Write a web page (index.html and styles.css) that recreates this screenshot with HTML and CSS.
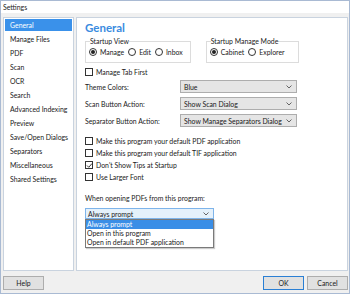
FILE: index.html
```html
<!DOCTYPE html>
<html>
<head>
<meta charset="utf-8">
<link rel="stylesheet" href="styles.css">
</head>
<body>
<div class="window">
  <div class="titlebar">Settings</div>
  <div class="body">
    <div class="main">
      <ul class="nav">
        <li class="selected">General</li>
        <li>Manage Files</li>
        <li>PDF</li>
        <li>Scan</li>
        <li>OCR</li>
        <li>Search</li>
        <li>Advanced Indexing</li>
        <li>Preview</li>
        <li>Save/Open Dialogs</li>
        <li>Separators</li>
        <li>Miscellaneous</li>
        <li>Shared Settings</li>
      </ul>
      <div class="panel">
        <h1 class="heading">General</h1>
        <div class="groups">
          <fieldset class="group view">
            <legend>Startup View</legend>
            <div class="radios">
              <span class="radio on"></span><span class="rlabel">Manage</span>
              <span class="radio"></span><span class="rlabel">Edit</span>
              <span class="radio"></span><span class="rlabel">Inbox</span>
            </div>
          </fieldset>
          <fieldset class="group mode">
            <legend>Startup Manage Mode</legend>
            <div class="radios">
              <span class="radio on"></span><span class="rlabel">Cabinet</span>
              <span class="radio"></span><span class="rlabel">Explorer</span>
            </div>
          </fieldset>
        </div>
        <div class="check first"><span class="box"></span><span>Manage Tab First</span></div>
        <div class="row first-row"><span class="rlbl">Theme Colors:</span><div class="select"><span>Blue</span><svg class="chev" width="6" height="4" viewBox="0 0 6 4"><polyline points="0.5,0.5 3,3 5.5,0.5" fill="none" stroke="#555" stroke-width="0.9"/></svg></div></div>
        <div class="row"><span class="rlbl">Scan Button Action:</span><div class="select"><span>Show Scan Dialog</span><svg class="chev" width="6" height="4" viewBox="0 0 6 4"><polyline points="0.5,0.5 3,3 5.5,0.5" fill="none" stroke="#555" stroke-width="0.9"/></svg></div></div>
        <div class="row"><span class="rlbl">Separator Button Action:</span><div class="select"><span>Show Manage Separators Dialog</span><svg class="chev" width="6" height="4" viewBox="0 0 6 4"><polyline points="0.5,0.5 3,3 5.5,0.5" fill="none" stroke="#555" stroke-width="0.9"/></svg></div></div>
        <div class="checks">
          <div class="check"><span class="box"></span><span>Make this program your default PDF application</span></div>
          <div class="check"><span class="box"></span><span>Make this program your default TIF application</span></div>
          <div class="check"><span class="box"><svg width="7" height="7" viewBox="0 0 7 7"><polyline points="1,3.5 2.8,5.3 6,1.5" fill="none" stroke="#222" stroke-width="0.9"/></svg></span><span>Don't Show Tips at Startup</span></div>
          <div class="check"><span class="box"></span><span>Use Larger Font</span></div>
        </div>
        <div class="opening">When opening PDFs from this program:</div>
        <div class="combo-wrap">
          <div class="combo"><span>Always prompt</span><svg class="chev" width="6" height="4" viewBox="0 0 6 4"><polyline points="0.5,0.5 3,3 5.5,0.5" fill="none" stroke="#555" stroke-width="0.9"/></svg></div>
          <ul class="dropdown">
            <li class="hl">Always prompt</li>
            <li>Open in this program</li>
            <li>Open in default PDF application</li>
          </ul>
        </div>
      </div>
    </div>
    <div class="footer">
      <button class="btn">Help</button>
      <div class="spacer"></div>
      <button class="btn ok">OK</button>
      <button class="btn">Cancel</button>
    </div>
  </div>
</div>
</body>
</html>
```
FILE: styles.css
```css
* { box-sizing: border-box; }
html, body { margin: 0; padding: 0; }
body {
  width: 350px;
  height: 294px;
  overflow: hidden;
  font-family: Lato, "Noto Sans", sans-serif;
  font-size: 6.9px;
  color: #1a1a1a;
  background: #fff;
}
.window {
  width: 350px;
  height: 294px;
  border: 1px solid #a9bad3;
  display: flex;
  flex-direction: column;
  background: #f0f0f0;
}
.titlebar {
  height: 12px;
  background: #fff;
  line-height: 12px;
  padding-left: 2px;
  color: #222;
}
.body {
  flex: 1;
  display: flex;
  flex-direction: column;
  padding: 4px 1px 0 2px;
}
.main {
  height: 254px;
  display: flex;
  gap: 2px;
}
.nav {
  list-style: none;
  margin: 0;
  padding: 1px;
  width: 71px;
  background: #fff;
  border: 1px solid #c9d3df;
}
.nav li {
  height: 14px;
  line-height: 12px;
  padding-left: 5px;
  white-space: nowrap;
}
.nav li.selected {
  background: #3a91ea;
  color: #fff;
  height: 12px;
  margin-bottom: 2px;
}
.panel {
  flex: 1;
  position: relative;
  background: #fff;
  border: 1px solid #c9d3df;
  padding: 3px 8px 0 8px;
}
.heading {
  margin: 0;
  height: 14px;
  line-height: 14px;
  font-size: 11.5px;
  font-weight: bold;
  color: #3a8be0;
}
.groups {
  display: flex;
  gap: 15px;
  margin-top: 2px;
}
.group {
  margin: 0;
  padding: 0 3px 5px 3px;
  border: 1px solid #dcdcdc;
}
.group legend {
  padding: 0;
  margin-left: 1px;
  line-height: 8px;
}
.group.view { width: 103px; }
.group.mode { width: 93px; }
.radios {
  display: flex;
  align-items: center;
  height: 10px;
  margin-top: 2px;
}
.radio {
  width: 8px;
  height: 8px;
  border: 1px solid #333;
  border-radius: 50%;
  display: flex;
  align-items: center;
  justify-content: center;
  margin-right: 3px;
  flex: none;
}
.radio.on::after {
  content: "";
  width: 4px;
  height: 4px;
  border-radius: 50%;
  background: #222;
}
.rlabel { margin-right: 4px; }
.check {
  display: flex;
  align-items: center;
  height: 12px;
  white-space: nowrap;
}
.check.first { margin-top: 3px; }
.box {
  width: 8px;
  height: 8px;
  border: 1px solid #333;
  margin-right: 3px;
  flex: none;
  display: flex;
}
.box svg { margin: -0.5px; }
.row {
  display: flex;
  align-items: center;
  height: 13px;
  margin-top: 4px;
}
.row.first-row { margin-top: 2px; }
.rlbl { width: 95px; flex: none; }
.select {
  width: 117px;
  height: 13px;
  background: #e5e5e5;
  border: 1px solid #adadad;
  display: flex;
  align-items: center;
  justify-content: space-between;
  padding: 0 4px 0 3px;
  white-space: nowrap;
}
.chev { flex: none; }
.checks { margin-top: 8px; }
.opening {
  margin-top: 10px;
  height: 10px;
  line-height: 10px;
}
.combo-wrap {
  position: relative;
  margin-top: 5px;
  width: 129px;
}
.combo {
  height: 11px;
  background: #e5f1fb;
  border: 1px solid #7eb4ea;
  display: flex;
  align-items: center;
  justify-content: space-between;
  padding: 0 4px 0 2px;
}
.dropdown {
  position: absolute;
  left: 0;
  top: 11px;
  width: 129px;
  margin: 0;
  padding: 0;
  list-style: none;
  background: #fff;
  border: 1px solid #7a7a7a;
  box-shadow: 1px 1px 1px rgba(0,0,0,0.2);
}
.dropdown li {
  height: 9px;
  line-height: 9px;
  padding-left: 1px;
  white-space: nowrap;
}
.dropdown li.hl {
  background: #3a8ee6;
  color: #fff;
}
.footer {
  display: flex;
  margin-top: 5px;
  gap: 3px;
}
.spacer { flex: 1; }
.btn {
  font-family: inherit;
  font-size: 6.9px;
  color: #1a1a1a;
  width: 41px;
  height: 14px;
  padding: 0;
  background: #e1e1e1;
  border: 1px solid #adadad;
}
.btn.ok { border-color: #2a7fd4; }
```
